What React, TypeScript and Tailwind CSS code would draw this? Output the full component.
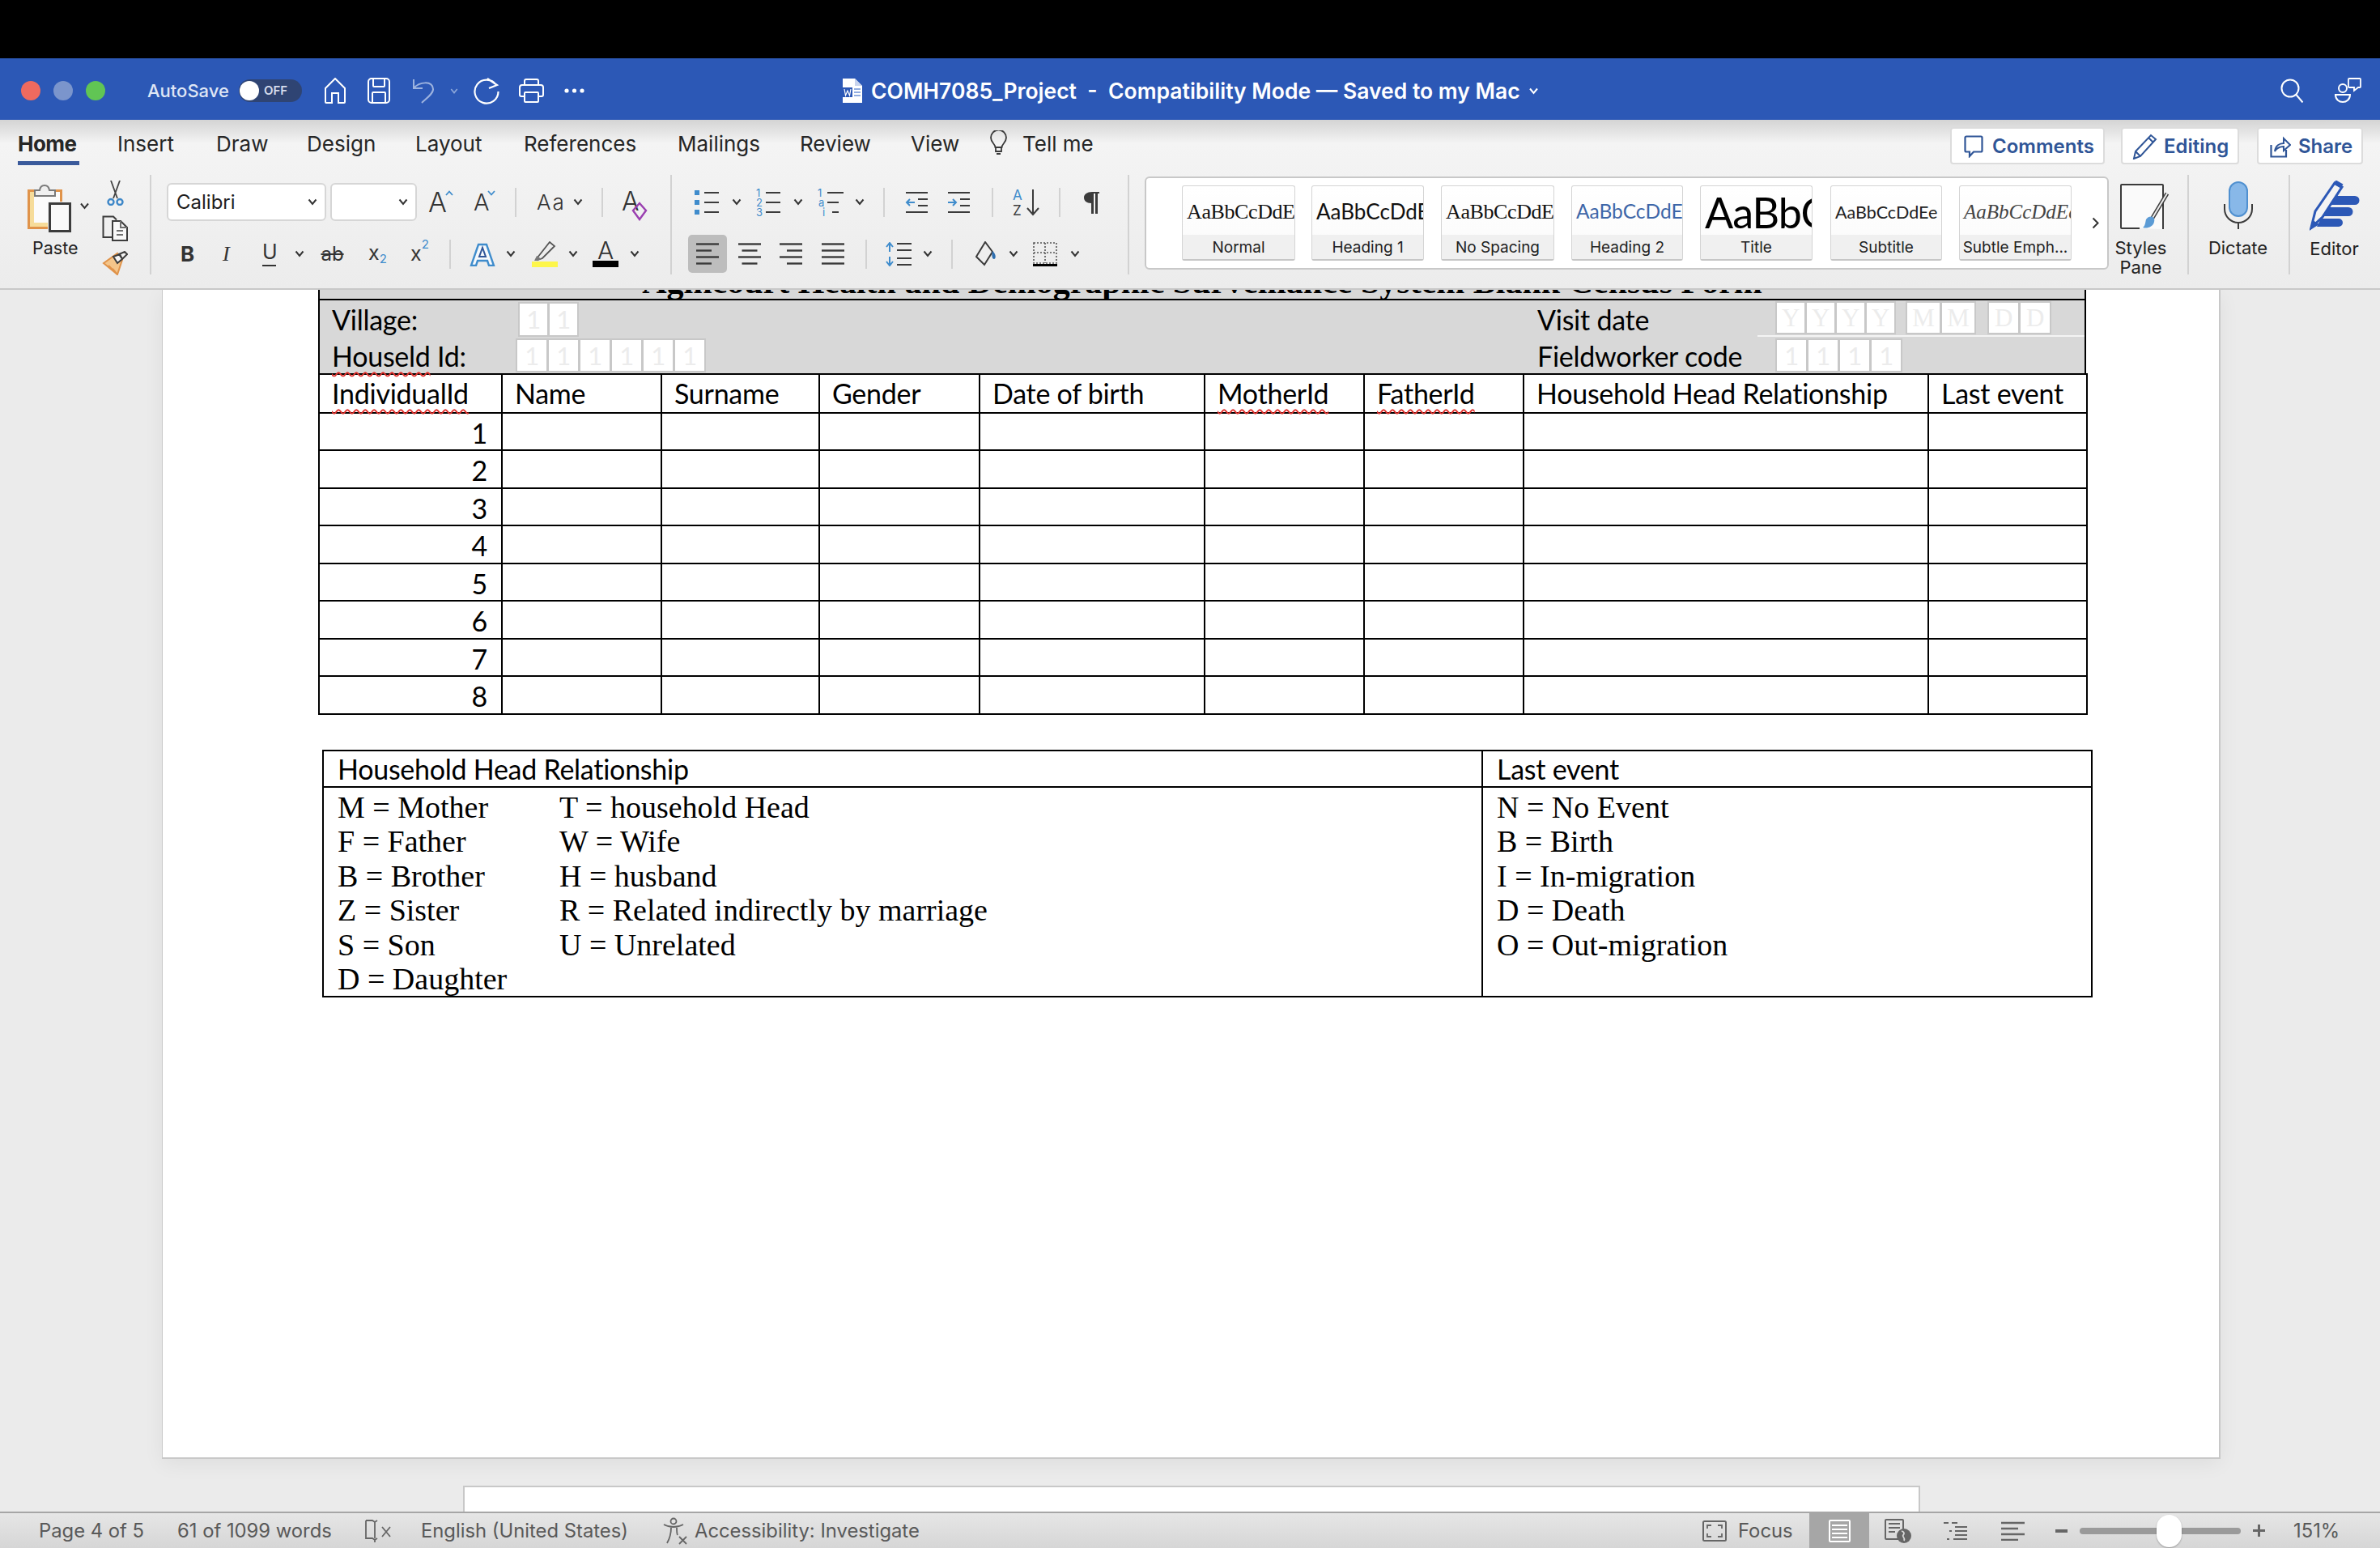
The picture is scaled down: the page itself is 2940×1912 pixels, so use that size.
import React from "react";

const UI = "font-['Inter','Liberation_Sans',sans-serif]";

function Chev({ c = "", color = "#333", w = 12 }: { c?: string; color?: string; w?: number }) {
  return (
    <svg width={w} height="9" viewBox="0 0 12 9" className={"shrink-0 " + c}>
      <path d="M1.5 1.5 6 7l4.5-5.5" fill="none" stroke={color} strokeWidth="2" />
    </svg>
  );
}
function Sep({ c = "" }: { c?: string }) {
  return <div className={"w-[2px] h-[36px] bg-[#d2d2d2] shrink-0 " + c} />;
}

function ListIcon({ c = "", kind }: { c?: string; kind: "bullet" | "num" | "multi" }) {
  const lines = kind === "multi" ? [[12, 32], [12, 26], [18, 26]] : [[12, 30], [12, 30], [12, 30]];
  return (
    <svg width="30" height="34" viewBox="0 0 30 34" className={"shrink-0 overflow-visible " + c}>
      {lines.map((l, i) => (
        <path key={i} d={`M${l[0]} ${5 + i * 12}H${l[1]}`} stroke="#3b3b3b" strokeWidth="2" />
      ))}
      {kind === "bullet" &&
        [0, 1, 2].map((i) => <rect key={i} x="0" y={2 + i * 12} width="6" height="6" fill="#3f8ccc" />)}
      {kind === "num" &&
        ["1", "2", "3"].map((t, i) => (
          <text key={t} x="0" y={10 + i * 12} fontSize="13" fontFamily="Inter" fill="#3f8ccc">
            {t}
          </text>
        ))}
      {kind === "multi" &&
        ["1", "a", "i"].map((t, i) => (
          <text key={t} x={i === 2 ? 6 : i} y={10 + i * 12} fontSize="13" fontFamily="Inter" fill="#3f8ccc">
            {t}
          </text>
        ))}
    </svg>
  );
}

function Indent({ c = "", out }: { c?: string; out?: boolean }) {
  return (
    <svg width="29" height="28" viewBox="0 0 29 28" className={"shrink-0 " + c}>
      <path d="M1 2h27M16 10h12M16 18h12M1 26h27" stroke="#3b3b3b" strokeWidth="2" />
      {out ? (
        <path d="M12 14H2m4-4-4 4 4 4" stroke="#3f8ccc" strokeWidth="2" fill="none" />
      ) : (
        <path d="M1 14h10m-4-4 4 4-4 4" stroke="#3f8ccc" strokeWidth="2" fill="none" />
      )}
    </svg>
  );
}

function Align({ c = "", kind }: { c?: string; kind: "l" | "c" | "r" | "j" }) {
  const L = 28;
  const S = kind === "j" ? 28 : 19;
  const x = (len: number) => (kind === "l" || kind === "j" ? 0 : kind === "c" ? (L - len) / 2 : L - len);
  return (
    <svg width="28" height="27" viewBox="0 0 28 27" className={"shrink-0 " + c}>
      {[L, S, L, S].map((len, i) => (
        <path key={i} d={`M${x(len)} ${1.5 + i * 8}h${len}`} stroke="#3a3a3a" strokeWidth="2.4" />
      ))}
    </svg>
  );
}

function FontBtn({ c = "", children }: { c?: string; children: React.ReactNode }) {
  return <div className={"shrink-0 text-[#333] leading-none " + c}>{children}</div>;
}

function GalleryCard({
  w,
  label,
  sample,
  sc,
  ml,
}: {
  w: string;
  label: string;
  sample: string;
  sc: string;
  ml: string;
}) {
  return (
    <div className={"h-[93px] rounded-[3px] border border-[#d4d4d4] border-b-2 border-b-[#c6c6c6] overflow-hidden flex flex-col shrink-0 bg-gradient-to-b from-white to-[#fafafa] " + w + " " + ml}>
      <div className="h-[61px] flex items-center justify-start pl-[5px] pt-[4px] overflow-hidden whitespace-nowrap">
        <span className={sc}>{sample}</span>
      </div>
      <div className={"flex-1 flex items-center justify-center bg-[#f0f0f0] text-[19px] pt-[2px] text-[#222] " + UI}>{label}</div>
    </div>
  );
}

function Boxes({ items, w, h, serif, c = "" }: { items: string[]; w: string; h: string; serif?: boolean; c?: string }) {
  return (
    <div className={"flex shrink-0 " + c}>
      {items.map((t, i) => (
        <div
          key={i}
          className={
            "flex items-center justify-center bg-white border-2 border-[#c8c8c8] text-[#ececec] text-[31px] leading-none -mr-[1px] " +
            w + " " + h + " " +
            (serif ? "font-['Liberation_Serif',serif]" : "font-['Lato',sans-serif]")
          }
        >
          {t}
        </div>
      ))}
    </div>
  );
}

function Wavy({ children }: { children: React.ReactNode }) {
  return (
    <span className="underline decoration-wavy decoration-[#e0302c] decoration-2 underline-offset-[6px] [text-decoration-skip-ink:none]">
      {children}
    </span>
  );
}

const headCols: React.ReactNode[] = [
  <Wavy>IndividualId</Wavy>,
  "Name",
  "Surname",
  "Gender",
  "Date of birth",
  <Wavy>MotherId</Wavy>,
  <Wavy>FatherId</Wavy>,
  "Household Head Relationship",
  "Last event",
];

function Table1() {
  return (
    <div className="w-[2184px] ml-[192px] font-['Lato',sans-serif] text-black text-[34px] tracking-[-0.26px]">
      <div className="h-[11px] overflow-hidden bg-[#d8d8d8] border-x-2 border-black text-center">
        <div className="-mt-[30px] h-[40px] leading-[40px] text-[42px] font-bold tracking-normal whitespace-nowrap font-['Liberation_Serif',serif]">
          Agincourt Health and Demographic Surveillance System Blank Census Form
        </div>
      </div>
      <div className="h-[92px] bg-[#d8d8d8] border-x-2 border-t-2 border-black">
        <div className="h-[46px] flex items-center relative">
          <div className="w-[245px] pl-[15px] shrink-0">Village:</div>
          <Boxes items={["1", "1"]} w="w-[38px]" h="h-[43px]" />
          <div className="w-[1185px] shrink-0" />
          <div className="w-[294px] shrink-0">Visit date</div>
          <Boxes items={["Y", "Y", "Y", "Y"]} w="w-[38px]" h="h-[41px]" serif c="mb-[3px]" />
          <div className="w-[13px] shrink-0" />
          <Boxes items={["M", "M"]} w="w-[44px]" h="h-[41px]" serif c="mb-[3px]" />
          <div className="w-[15px] shrink-0" />
          <Boxes items={["D", "D"]} w="w-[40px]" h="h-[41px]" serif c="mb-[3px]" />
          <div className="absolute right-0 bottom-[1px] w-[404px] h-[2px] bg-[#f4f4f4]" />
        </div>
        <div className="h-[44px] flex items-center">
          <div className="w-[242px] pl-[15px] shrink-0 whitespace-nowrap">
            <Wavy>Houseld</Wavy> Id:
          </div>
          <Boxes items={["1", "1", "1", "1", "1", "1"]} w="w-[40px]" h="h-[42px]" />
          <div className="w-[1028px] shrink-0" />
          <div className="w-[294px] shrink-0">Fieldworker code</div>
          <Boxes items={["1", "1", "1", "1"]} w="w-[40px]" h="h-[42px]" />
        </div>
      </div>
      <table className="w-[2184px] table-fixed border-collapse">
        <colgroup>
          <col className="w-[226px]" />
          <col className="w-[197px]" />
          <col className="w-[195px]" />
          <col className="w-[198px]" />
          <col className="w-[278px]" />
          <col className="w-[197px]" />
          <col className="w-[197px]" />
          <col className="w-[500px]" />
          <col className="w-[196px]" />
        </colgroup>
        <tbody>
          <tr className="h-[48px]">
            {headCols.map((h, i) => (
              <td key={i} className="border-2 border-black pl-[15px] whitespace-nowrap align-middle leading-none">
                {h}
              </td>
            ))}
          </tr>
          {[1, 2, 3, 4, 5, 6, 7, 8].map((n) => (
            <tr key={n} className={n % 2 === 0 ? "h-[47px]" : "h-[46px]"}>
              <td className="border-2 border-black text-right pr-[17px] leading-none pt-[3px]">{n}</td>
              {[0, 1, 2, 3, 4, 5, 6, 7].map((k) => (
                <td key={k} className="border-2 border-black" />
              ))}
            </tr>
          ))}
        </tbody>
      </table>
    </div>
  );
}

const relLeft = ["M = Mother", "F = Father", "B = Brother", "Z = Sister", "S = Son", "D = Daughter"];
const relMid = ["T = household Head", "W = Wife", "H = husband", "R = Related indirectly by marriage", "U = Unrelated"];
const events = ["N = No Event", "B = Birth", "I = In-migration", "D = Death", "O = Out-migration"];

function Table2() {
  const serif = "font-['Liberation_Serif',serif] text-[38px] leading-[42.4px] whitespace-nowrap";
  return (
    <table className="w-[2185px] ml-[197px] mt-[43px] table-fixed border-collapse text-black">
      <colgroup>
        <col className="w-[1432px]" />
        <col className="w-[753px]" />
      </colgroup>
      <tbody>
        <tr className="h-[45px] font-['Lato',sans-serif] text-[34px] tracking-[-0.26px] leading-none">
          <td className="border-2 border-black pl-[17px]">Household Head Relationship</td>
          <td className="border-2 border-black pl-[17px]">Last event</td>
        </tr>
        <tr className="h-[258px]">
          <td className="border-2 border-black pl-[17px] align-top pt-[3px]">
            <div className={"flex " + serif}>
              <div className="w-[274px]">
                {relLeft.map((t) => (
                  <div key={t}>{t}</div>
                ))}
              </div>
              <div>
                {relMid.map((t) => (
                  <div key={t}>{t}</div>
                ))}
              </div>
            </div>
          </td>
          <td className="border-2 border-black pl-[17px] align-top pt-[3px]">
            <div className={serif}>
              {events.map((t) => (
                <div key={t}>{t}</div>
              ))}
            </div>
          </td>
        </tr>
      </tbody>
    </table>
  );
}

function TitleBar() {
  return (
    <div className={"h-[76px] pt-[4px] bg-[#2c58b6] flex items-center shrink-0 text-white " + UI}>
      <div className="w-[24px] h-[24px] rounded-full bg-[#ee6a5f] ml-[26px] shrink-0" />
      <div className="w-[24px] h-[24px] rounded-full bg-[#7b95cc] ml-[16px] shrink-0" />
      <div className="w-[24px] h-[24px] rounded-full bg-[#61c554] ml-[16px] shrink-0" />
      <div className="ml-[52px] w-[100px] text-[22px] font-medium text-[#dfe6f5] whitespace-nowrap shrink-0">AutoSave</div>
      <div className="ml-[13px] w-[78px] h-[28px] rounded-full bg-[#2f4473] flex items-center shrink-0">
        <div className="w-[24px] h-[24px] rounded-full bg-white ml-[1px]" />
        <span className="ml-[6px] text-[15px] font-semibold text-[#d5dcec]">OFF</span>
      </div>
      <svg width="28" height="32" viewBox="0 0 28 32" className="ml-[27px] shrink-0">
        <path d="M2 13 14 1l12 12v17a1 1 0 0 1-1 1h-7V19h-8v12H3a1 1 0 0 1-1-1Z" fill="none" stroke="#fff" strokeWidth="2" />
      </svg>
      <svg width="28" height="32" viewBox="0 0 28 32" className="ml-[26px] shrink-0">
        <rect x="1" y="1" width="26" height="30" rx="4" fill="none" stroke="#fff" strokeWidth="2" />
        <path d="M7 1v9a1 1 0 0 0 1 1h12a1 1 0 0 0 1-1V1M6 31V19a1 1 0 0 1 1-1h14a1 1 0 0 1 1 1v12" fill="none" stroke="#fff" strokeWidth="2" />
      </svg>
      <svg width="26" height="32" viewBox="0 0 26 32" className="ml-[28px] shrink-0">
        <path d="M1 2v11h11M1 13C8 5 24 3 25 14c.5 6-9 12-14 17" fill="none" stroke="#9db3df" strokeWidth="2" />
      </svg>
      <Chev c="ml-[20px]" color="#8ca6da" w={10} />
      <svg width="32" height="33" viewBox="0 0 32 33" className="ml-[19px] shrink-0">
        <path d="M28 9A14.5 14.5 0 1 0 30.5 17M17 1l12 8-10 4" fill="none" stroke="#fff" strokeWidth="2.2" />
      </svg>
      <svg width="31" height="30" viewBox="0 0 31 30" className="ml-[24px] shrink-0">
        <path d="M7 8V3a2 2 0 0 1 2-2h13a2 2 0 0 1 2 2v5M7 22H3a2 2 0 0 1-2-2V11a3 3 0 0 1 3-3h23a3 3 0 0 1 3 3v9a2 2 0 0 1-2 2h-4" fill="none" stroke="#fff" strokeWidth="2" />
        <rect x="7" y="17" width="17" height="12" rx="1" fill="none" stroke="#fff" strokeWidth="2" />
      </svg>
      <svg width="25" height="6" viewBox="0 0 25 6" className="ml-[25px] shrink-0">
        <circle cx="3" cy="3" r="2.6" fill="#fff" />
        <circle cx="12.5" cy="3" r="2.6" fill="#fff" />
        <circle cx="22" cy="3" r="2.6" fill="#fff" />
      </svg>
      <svg width="24" height="30" viewBox="0 0 24 30" className="ml-[319px] shrink-0">
        <path d="M0 0h15l9 9v21H0Z" fill="#fff" />
        <path d="M15 0v9h9Z" fill="#c8d4ee" />
        <rect x="0" y="11" width="12" height="12" fill="#2c58b6" />
        <path d="m2 13 1.500 8 2.500-6 2.500 6 1.500-8" fill="none" stroke="#fff" strokeWidth="1.200" />
        <path d="M14 13h8M14 17h8M14 21h8" stroke="#6f92d6" strokeWidth="1.6" />
      </svg>
      <div className="ml-[11px] w-[804px] text-[26.5px] font-semibold whitespace-pre shrink-0 leading-none">
        COMH7085_Project  -  Compatibility Mode — Saved to my Mac
      </div>
      <Chev c="ml-[8px]" color="#fff" w={13} />
      <svg width="29" height="30" viewBox="0 0 29 30" className="ml-[916px] shrink-0">
        <circle cx="12" cy="12" r="10.5" fill="none" stroke="#fff" strokeWidth="2" />
        <path d="m19.5 20 8 9.5" stroke="#fff" strokeWidth="2" />
      </svg>
      <svg width="33" height="32" viewBox="0 0 33 32" className="ml-[38px] shrink-0">
        <circle cx="10" cy="13" r="5" fill="none" stroke="#fff" strokeWidth="2" />
        <path d="M1 21h18c0 12-18 12-18 0Z" fill="none" stroke="#fff" strokeWidth="2" />
        <path d="M18 1h13a1 1 0 0 1 1 1v9a1 1 0 0 1-1 1h-2l-5 4v-4h-6a1 1 0 0 1-1-1V2a1 1 0 0 1 1-1Z" fill="none" stroke="#fff" strokeWidth="1.8" />
      </svg>
    </div>
  );
}

function TabsRow() {
  return (
    <div className={"h-[64px] flex items-start pt-[10px] text-[26px] text-[#262626] shrink-0 relative whitespace-nowrap " + UI}>
      <div className="ml-[22px] w-[76px] h-[46px] font-bold border-b-[5px] border-[#3a5a9b] tracking-[-0.5px]">Home</div>
      <div className="ml-[47px] w-[70px]">Insert</div>
      <div className="ml-[52px] w-[62px]">Draw</div>
      <div className="ml-[50px] w-[84px]">Design</div>
      <div className="ml-[50px] w-[82px]">Layout</div>
      <div className="ml-[52px] w-[138px]">References</div>
      <div className="ml-[52px] w-[102px]">Mailings</div>
      <div className="ml-[49px] w-[88px]">Review</div>
      <div className="ml-[49px] w-[59px]">View</div>
      <svg width="21" height="30" viewBox="0 0 21 30" className="ml-[39px] mt-[3px] shrink-0">
        <path d="M6.5 21c0-4-5.5-6-5.500-12a9 9 0 0 1 19 0c0 6-5.500 8-5.500 12ZM7 21v5h7v-5M8 29h5" fill="none" stroke="#3a3a3a" strokeWidth="1.8" />
      </svg>
      <div className="ml-[19px] w-[85px]">Tell me</div>
      <div className="ml-[1061px] w-[191px] h-[46px] -mt-[1px] border-2 border-[#dcdcdc] rounded-[4px] bg-white flex items-center text-[#2f5597] font-semibold text-[24px] pt-[2px] shrink-0">
        <svg width="24" height="28" viewBox="0 0 24 28" className="ml-[15px] shrink-0">
          <path d="M3 1.500h18a1.500 1.500 0 0 1 1.500 1.500v16a1.500 1.500 0 0 1-1.500 1.500h-9L7 26v-5.500H3A1.500 1.500 0 0 1 1.500 19V3A1.500 1.500 0 0 1 3 1.500Z" fill="none" stroke="#2f5597" strokeWidth="2.2" />
        </svg>
        <span className="ml-[11px]">Comments</span>
      </div>
      <div className="ml-[20px] w-[146px] h-[46px] -mt-[1px] border-2 border-[#dcdcdc] rounded-[4px] bg-white flex items-center text-[#2f5597] font-semibold text-[24px] pt-[2px] shrink-0">
        <svg width="32" height="32" viewBox="0 0 32 32" className="ml-[12px] shrink-0">
          <path d="M4 22 23 2l6 5L10 28l-8 3ZM20 5l6 6M4 22l6 6" fill="none" stroke="#2f5597" strokeWidth="2" />
        </svg>
        <span className="ml-[7px]">Editing</span>
      </div>
      <div className="ml-[22px] w-[131px] h-[46px] -mt-[1px] border-2 border-[#dcdcdc] rounded-[4px] bg-white flex items-center text-[#2f5597] font-semibold text-[24px] pt-[2px] shrink-0">
        <svg width="26" height="28" viewBox="0 0 26 28" className="ml-[14px] shrink-0">
          <path d="M1.500 12v14.500H20V18" fill="none" stroke="#2f5597" strokeWidth="2.2" />
          <path d="M6 20c1-7 6-10 11-10V4l8 8-8 7v-5c-4 0-8 1-11 6Z" fill="none" stroke="#2f5597" strokeWidth="2" />
        </svg>
        <span className="ml-[9px]">Share</span>
      </div>
    </div>
  );
}

function PasteGroup() {
  return (
    <div className={"w-[185px] shrink-0 flex " + UI}>
      <div className="w-[118px] shrink-0 pl-[34px] pt-[14px]">
        <div className="flex">
          <svg width="54" height="61" viewBox="0 0 54 61" className="shrink-0">
            <rect x="1.500" y="9.500" width="40" height="46" fill="#f6dc9a" stroke="#e0934a" strokeWidth="3" />
            <rect x="8" y="11" width="32" height="38" fill="#fbfbfb" />
            <path d="M9 16V9h6c1-8 11-8 12 0h7v7Z" fill="#f0f0f0" stroke="#7a7a7a" strokeWidth="2" />
            <rect x="25" y="23" width="29" height="38" fill="#f4f4f4" />
            <rect x="27.500" y="25.500" width="25" height="34" fill="#f9f9f9" stroke="#3c3c3c" strokeWidth="3" />
          </svg>
          <Chev c="ml-[10px] mt-[24px]" w={13} />
        </div>
        <div className="text-[21.500px] text-[#222] mt-[9px] ml-[6px] leading-none">Paste</div>
      </div>
      <div className="flex flex-col items-center w-[32px] ml-[8px] pt-[11px]">
        <svg width="21" height="31" viewBox="0 0 21 31" className="shrink-0">
          <path d="M5 0l8 22M16 0 8 22" stroke="#444" strokeWidth="1.800" fill="none" />
          <circle cx="5" cy="26.500" r="3.500" fill="none" stroke="#3d87c8" strokeWidth="2.400" />
          <circle cx="16" cy="26.500" r="3.500" fill="none" stroke="#3d87c8" strokeWidth="2.400" />
        </svg>
        <svg width="32" height="32" viewBox="0 0 32 32" className="mt-[12px] shrink-0">
          <path d="M12 27H1.500V1.500H14l4 4" fill="none" stroke="#3c3c3c" strokeWidth="2" />
          <path d="M13 7h10l8 8v16H13Z" fill="#f8f8f8" stroke="#3c3c3c" strokeWidth="2" />
          <path d="M23 7v8h8M18 19h8M18 24h8" fill="none" stroke="#707070" strokeWidth="2" />
        </svg>
        <svg width="32" height="30" viewBox="0 0 32 30" className="mt-[12px] shrink-0">
          <path d="M2 15 19 3l6 8-6 18Z" fill="#f4c58a" stroke="#e0934a" strokeWidth="2" />
          <path d="m13 22 6 7M8 18l5 5" stroke="#e0934a" strokeWidth="2" />
          <path d="m14 7 8-3 3 6-6 5ZM21 4l7-3 3 3-6 6Z" fill="#f4f4f4" stroke="#3c3c3c" strokeWidth="2" />
        </svg>
      </div>
    </div>
  );
}

function FontGroup() {
  return (
    <div className={"w-[641px] shrink-0 pt-[14px] " + UI}>
      <div className="flex items-center h-[47px]">
        <div className="ml-[19px] w-[197px] h-[47px] bg-white border-2 border-[#d6d6d6] rounded-[6px] flex items-center justify-between pl-[10px] pr-[9px] text-[24px] text-[#1e1e1e] shrink-0">
          Calibri
          <Chev />
        </div>
        <div className="ml-[5px] w-[107px] h-[47px] bg-white border-2 border-[#d6d6d6] rounded-[6px] flex items-center justify-end pr-[9px] shrink-0">
          <Chev />
        </div>
        <FontBtn c="ml-[14px] w-[31px] relative text-[34px] font-light">
          A
          <svg width="10" height="7" viewBox="0 0 10 7" className="absolute right-0 top-[2px]">
            <path d="M1 6l4-4.500L9 6" fill="none" stroke="#3f8ccc" strokeWidth="1.800" />
          </svg>
        </FontBtn>
        <FontBtn c="ml-[25px] w-[27px] relative text-[29px] font-light">
          A
          <svg width="10" height="7" viewBox="0 0 10 7" className="absolute right-0 top-0">
            <path d="M1 1l4 4.500L9 1" fill="none" stroke="#3f8ccc" strokeWidth="1.800" />
          </svg>
        </FontBtn>
        <Sep c="ml-[24px]" />
        <FontBtn c="ml-[25px] w-[32px] text-[26px] font-light tracking-[2px] whitespace-nowrap">Aa</FontBtn>
        <Chev c="ml-[13px]" />
        <Sep c="ml-[23px]" />
        <FontBtn c="ml-[23px] w-[32px] relative text-[32px] font-light h-[34px]">
          A
          <svg width="20" height="24" viewBox="0 0 20 24" className="absolute right-0 bottom-[-6px]">
            <path d="M10 2l8 9-8 11-8-11Z" fill="none" stroke="#9a3fb0" strokeWidth="2.400" />
          </svg>
        </FontBtn>
      </div>
      <div className="flex items-center h-[47px] mt-[17px]">
        <FontBtn c="ml-[36px] w-[16px] text-[26px] font-bold">B</FontBtn>
        <FontBtn c="ml-[36px] w-[13px] text-[26px] italic font-['Liberation_Serif',serif]">I</FontBtn>
        <FontBtn c="ml-[36px] w-[17px] text-[25px] border-b-2 border-[#333] pb-[3px] text-center">U</FontBtn>
        <Chev c="ml-[23px]" />
        <FontBtn c="ml-[19px] w-[31px] text-[24px] line-through text-center">ab</FontBtn>
        <div className="ml-[29px] w-[22px] shrink-0 flex items-start text-[#333] text-[25px] leading-none">
          x<span className="text-[15px] text-[#3f8ccc] mt-[12px]">2</span>
        </div>
        <div className="ml-[30px] w-[22px] shrink-0 flex items-start text-[#333] text-[25px] leading-none">
          x<span className="text-[15px] text-[#3f8ccc] -mt-[7px]">2</span>
        </div>
        <Sep c="ml-[26px]" />
        <svg width="32" height="30" viewBox="0 0 32 30" className="ml-[23px] shrink-0">
          <path d="M11 3h10l9 26h-6l-2-6H10l-2 6H2Z" fill="#f6f9fc" stroke="#3f8ccc" strokeWidth="2.400" />
          <path d="m12 18 4-11 4 11Z" fill="none" stroke="#2f5597" strokeWidth="2" />
        </svg>
        <Chev c="ml-[13px]" />
        <svg width="32" height="32" viewBox="0 0 32 32" className="ml-[20px] shrink-0">
          <path d="M7 20 22 1l6 5-15 15-6 2Z" fill="none" stroke="#555" strokeWidth="1.800" />
          <path d="m6 18 6 4-5 2H3Z" fill="#777" />
          <rect x="0" y="25" width="32" height="7" fill="#fdf64b" />
        </svg>
        <Chev c="ml-[13px]" />
        <div className="ml-[18px] w-[32px] shrink-0 flex flex-col items-center">
          <span className="text-[30px] leading-[24px] font-light text-[#333]">A</span>
          <div className="w-[32px] h-[8px] bg-black mt-[1px]" />
        </div>
        <Chev c="ml-[14px]" />
      </div>
    </div>
  );
}

function ParaGroup() {
  return (
    <div className="w-[563px] shrink-0 pt-[14px]">
      <div className="flex items-center h-[47px]">
        <ListIcon kind="bullet" c="ml-[28px]" />
        <Chev c="ml-[16px]" />
        <ListIcon kind="num" c="ml-[18px]" />
        <Chev c="ml-[16px]" />
        <ListIcon kind="multi" c="ml-[18px]" />
        <Chev c="ml-[16px]" />
        <Sep c="ml-[23px]" />
        <Indent out c="ml-[25px]" />
        <Indent c="ml-[23px]" />
        <Sep c="ml-[26px]" />
        <svg width="33" height="34" viewBox="0 0 33 34" className="ml-[24px] shrink-0 overflow-visible">
          <text x="0" y="14" fontSize="17" fontFamily="Inter" fill="#3f8ccc">A</text>
          <text x="0" y="33" fontSize="17" fontFamily="Inter" fill="#3b3b3b">Z</text>
          <path d="M25 1v30m-7-7 7 8 7-8" fill="none" stroke="#3b3b3b" strokeWidth="2" />
        </svg>
        <Sep c="ml-[24px]" />
        <svg width="20" height="28" viewBox="0 0 20 28" className="ml-[29px] shrink-0">
          <path d="M10 1h9v2h-2v25h-3V3h-2v25H9V15C3 15 0 12 0 8s4-7 10-7Z" fill="#3b3b3b" />
        </svg>
      </div>
      <div className="flex items-center h-[47px] mt-[17px]">
        <div className="ml-[20px] w-[48px] h-[47px] rounded-[5px] bg-[#bdbdbd] flex items-center justify-center shrink-0">
          <Align kind="l" />
        </div>
        <Align kind="c" c="ml-[14px]" />
        <Align kind="r" c="ml-[23px]" />
        <Align kind="j" c="ml-[24px]" />
        <Sep c="ml-[26px]" />
        <svg width="32" height="30" viewBox="0 0 32 30" className="ml-[23px] shrink-0">
          <path d="M5 12V2M1 6l4-5 4 5M5 18v10m-4-4 4 5 4-5" fill="none" stroke="#3f8ccc" strokeWidth="2" />
          <path d="M14 2h18M14 10h18M14 20h18M14 28h18" stroke="#3b3b3b" strokeWidth="2.200" />
        </svg>
        <Chev c="ml-[14px]" />
        <Sep c="ml-[23px]" />
        <svg width="26" height="32" viewBox="0 0 26 32" className="ml-[28px] shrink-0">
          <path d="M12 1 1 19l10 10 10-16Z" fill="none" stroke="#3b3b3b" strokeWidth="2" />
          <path d="M21 12c4 3 5 9 2 10-3 0-3-6-2-10Z" fill="#2f6fb0" />
        </svg>
        <Chev c="ml-[15px]" />
        <svg width="30" height="30" viewBox="0 0 30 30" className="ml-[18px] shrink-0">
          <path d="M1 1h28v25H1ZM15 1v25M1 13h28" fill="none" stroke="#555" strokeWidth="1.600" strokeDasharray="2 2" />
          <path d="M0 28.500h30" stroke="#000" strokeWidth="3" />
        </svg>
        <Chev c="ml-[16px]" />
      </div>
    </div>
  );
}

function Gallery() {
  const s = "font-['Liberation_Serif',serif] text-[26px] tracking-[-0.4px] text-[#111]";
  return (
    <div className="ml-[19px] mt-[6px] w-[1191px] h-[115px] bg-white border-2 border-[#c8c8c8] rounded-[6px] flex items-center shrink-0">
      <GalleryCard ml="ml-[44px]" w="w-[140px]" label="Normal" sample="AaBbCcDdEe" sc={s} />
      <GalleryCard ml="ml-[20px]" w="w-[139px]" label="Heading 1" sample="AaBbCcDdEe" sc="font-['Lato',sans-serif] text-[26px] text-[#111]" />
      <GalleryCard ml="ml-[21px]" w="w-[140px]" label="No Spacing" sample="AaBbCcDdEe" sc={s} />
      <GalleryCard ml="ml-[21px]" w="w-[138px]" label="Heading 2" sample="AaBbCcDdEe" sc="font-['Lato',sans-serif] text-[24.500px] text-[#3d66a8]" />
      <GalleryCard ml="ml-[21px]" w="w-[139px]" label="Title" sample="AaBbCcDdEe" sc="font-['Lato',sans-serif] text-[52px] tracking-[-1px] text-black" />
      <GalleryCard ml="ml-[22px]" w="w-[138px]" label="Subtitle" sample="AaBbCcDdEe" sc="font-['Lato',sans-serif] text-[21.500px] text-[#222]" />
      <GalleryCard ml="ml-[21px]" w="w-[139px]" label="Subtle Emph..." sample="AaBbCcDdEe" sc="font-['Liberation_Serif',serif] italic text-[25px] text-[#444]" />
      <svg width="9" height="15" viewBox="0 0 9 15" className="ml-[25px] shrink-0">
        <path d="m1.500 1.500 6 6-6 6" fill="none" stroke="#333" strokeWidth="2" />
      </svg>
    </div>
  );
}

function RightTools() {
  const label = "text-[22px] text-[#222] leading-[24px] text-center " + UI;
  return (
    <div className="flex shrink-0">
      <div className="w-[97px] shrink-0 flex flex-col items-center pt-[15px] pr-[18px]">
        <svg width="60" height="56" viewBox="0 0 60 56" className="ml-[8px] shrink-0">
          <path d="M24 55H2a1 1 0 0 1-1-1V2a1 1 0 0 1 1-1h50a1 1 0 0 1 1 1v54" fill="#fafafa" stroke="#3b3b3b" strokeWidth="2" />
          <path d="M58 12 40 42" stroke="#3b3b3b" strokeWidth="5" />
          <path d="M58 12 40 42" stroke="#eee" strokeWidth="2" />
          <path d="M32 44c4-6 12-4 10 3-1 6-9 9-14 7 3-2 3-6 4-10Z" fill="#5b9bd5" />
        </svg>
        <div className={"mt-[11px] " + label}>
          Styles
          <br />
          Pane
        </div>
      </div>
      <div className="w-[2px] h-[123px] mt-[4px] bg-[#d2d2d2] shrink-0" />
      <div className="w-[123px] shrink-0 flex flex-col items-center pt-[12px] pr-[2px]">
        <svg width="36" height="59" viewBox="0 0 36 59" className="shrink-0">
          <rect x="7" y="1" width="22" height="42" rx="11" fill="#88b8e8" stroke="#4f90d0" strokeWidth="2" />
          <path d="M1 28v6a17 17 0 0 0 34 0v-6M18 51v8" fill="none" stroke="#3b3b3b" strokeWidth="2" />
        </svg>
        <div className={"mt-[11px] " + label}>Dictate</div>
      </div>
      <div className="w-[2px] h-[123px] mt-[4px] bg-[#d2d2d2] shrink-0" />
      <div className="w-[111px] shrink-0 flex flex-col items-center pt-[11px] pr-[2px]">
        <svg width="62" height="62" viewBox="0 0 62 62" className="shrink-0">
          <path d="M30 19h26a5 5 0 0 1 0 11H24ZM22 33h26a5 5 0 0 1 0 11H16ZM14 47h22a5 5 0 0 1 0 10H9Z" fill="#2c58b6" />
          <path d="M2 58 7 38 31 3l9 5-24 37Z" fill="#f4f4f4" stroke="#2c58b6" strokeWidth="3" />
          <path d="M31 2l9 5" stroke="#2c58b6" strokeWidth="6" />
          <path d="m1 61 3-12 8 5Z" fill="#2c58b6" />
        </svg>
        <div className={"mt-[10px] " + label}>Editor</div>
      </div>
    </div>
  );
}

function Ribbon() {
  return (
    <div className="h-[210px] shrink-0 flex flex-col bg-gradient-to-b from-[#d4d4d4] via-[#f4f4f4] via-[14%] to-[#ececec] border-b-2 border-[#c8c8c8]">
      <TabsRow />
      <div className="flex flex-1">
        <PasteGroup />
        <div className="w-[2px] h-[123px] mt-[4px] bg-[#d2d2d2] shrink-0" />
        <FontGroup />
        <div className="w-[2px] h-[123px] mt-[4px] bg-[#d2d2d2] shrink-0" />
        <ParaGroup />
        <div className="w-[2px] h-[123px] mt-[4px] bg-[#d2d2d2] shrink-0" />
        <Gallery />
        <RightTools />
      </div>
    </div>
  );
}

function StatusBar() {
  return (
    <div className={"h-[45px] shrink-0 flex items-center border-t-2 border-[#a6a6a6] bg-gradient-to-b from-[#e6e6e6] to-[#d6d6d6] text-[23.800px] text-[#595959] whitespace-nowrap " + UI}>
      <div className="ml-[48px] w-[129px]">Page 4 of 5</div>
      <div className="ml-[42px] w-[193px]">61 of 1099 words</div>
      <svg width="33" height="30" viewBox="0 0 33 30" className="ml-[39px] shrink-0">
        <path d="M1 2h8l3 2 3-2M12 4v20M1 2v22h8l3 2 3-2M12 26v3" fill="none" stroke="#666" strokeWidth="1.800" />
        <path d="m21 10 10 12m0-12L21 22" stroke="#666" strokeWidth="1.800" />
      </svg>
      <div className="ml-[36px] w-[259px]">English (United States)</div>
      <svg width="33" height="34" viewBox="0 0 33 34" className="ml-[40px] shrink-0">
        <circle cx="13" cy="5" r="3.500" fill="none" stroke="#666" strokeWidth="1.800" />
        <path d="M1 9c7 4 17 4 24 0M10 13c0 6-1 12-5 19M17 13c0 4 0 7 1 9" fill="none" stroke="#666" strokeWidth="1.800" />
        <path d="m20 24 9 9m0-9-9 9" stroke="#666" strokeWidth="1.800" />
      </svg>
      <div className="ml-[6px] w-[277px]">Accessibility: Investigate</div>
      <svg width="30" height="26" viewBox="0 0 30 26" className="ml-[968px] shrink-0">
        <rect x="1" y="1" width="28" height="24" rx="1.500" fill="none" stroke="#666" strokeWidth="2" />
        <path d="M6 10V6h5M24 10V6h-5M6 16v4h5M24 16v4h-5" fill="none" stroke="#666" strokeWidth="1.800" />
      </svg>
      <div className="ml-[14px] w-[67px]">Focus</div>
      <div className="ml-[21px] w-[74px] h-[43px] bg-[#a6a6a6] flex items-center justify-center shrink-0">
        <svg width="27" height="28" viewBox="0 0 27 28">
          <rect x="1" y="1" width="25" height="26" rx="1" fill="#a6a6a6" stroke="#fff" strokeWidth="2" />
          <path d="M4 7h19M4 12h19M4 17h19M4 22h19" stroke="#fff" strokeWidth="2" />
        </svg>
      </div>
      <svg width="33" height="30" viewBox="0 0 33 30" className="ml-[19px] shrink-0">
        <rect x="1" y="1" width="22" height="24" rx="1" fill="none" stroke="#666" strokeWidth="2" />
        <path d="M5 6h14M5 11h14M5 16h8" stroke="#666" strokeWidth="2" />
        <circle cx="24" cy="21" r="9" fill="#666" />
        <path d="M21 15c3 1 4 3 2 5s3 3 1 7" stroke="#d9d9d9" strokeWidth="1.800" fill="none" />
      </svg>
      <svg width="29" height="24" viewBox="0 0 29 24" className="ml-[40px] shrink-0">
        <path d="M0 2h6M10 2h7M7 12h3M14 12h15M7 22h-3M12 22h17M14 7h15M14 17h15" stroke="#666" strokeWidth="2" />
      </svg>
      <svg width="29" height="24" viewBox="0 0 29 24" className="ml-[42px] shrink-0">
        <path d="M0 2h29M0 9h21M0 16h29M0 23h21" stroke="#666" strokeWidth="2.400" />
      </svg>
      <div className="ml-[38px] w-[15px] h-[4px] bg-[#666] shrink-0" />
      <div className="ml-[15px] w-[199px] h-[8px] rounded-full bg-[#9a9a9a] relative shrink-0">
        <div className="absolute left-[95px] -top-[16px] w-[31px] h-[40px] rounded-full bg-white shadow-[0_1px_2px_rgba(0,0,0,0.3)]" />
      </div>
      <div className="ml-[15px] w-[15px] h-[15px] relative shrink-0">
        <div className="absolute left-0 top-[6px] w-[15px] h-[3px] bg-[#666]" />
        <div className="absolute left-[6px] top-0 w-[3px] h-[15px] bg-[#666]" />
      </div>
      <div className="ml-[35px]">151%</div>
    </div>
  );
}

export default function App() {
  return (
    <div className="w-[2940px] h-[1912px] flex flex-col overflow-hidden bg-black">
      <div className="h-[72px] shrink-0 bg-black" />
      <TitleBar />
      <Ribbon />
      <div className="flex-1 min-h-0 bg-[#ebebeb] overflow-hidden flex flex-col">
        <div className="w-[2543px] h-[1444px] ml-[200px] shrink-0 bg-white border-r-2 border-b-2 border-l border-[#c8c8c8] shadow-[0_6px_24px_rgba(0,0,0,0.06)]">
          <Table1 />
          <Table2 />
        </div>
        <div className="w-[1800px] h-[40px] ml-[572px] mt-[33px] shrink-0 bg-white border-2 border-[#c8c8c8]" />
      </div>
      <StatusBar />
    </div>
  );
}
